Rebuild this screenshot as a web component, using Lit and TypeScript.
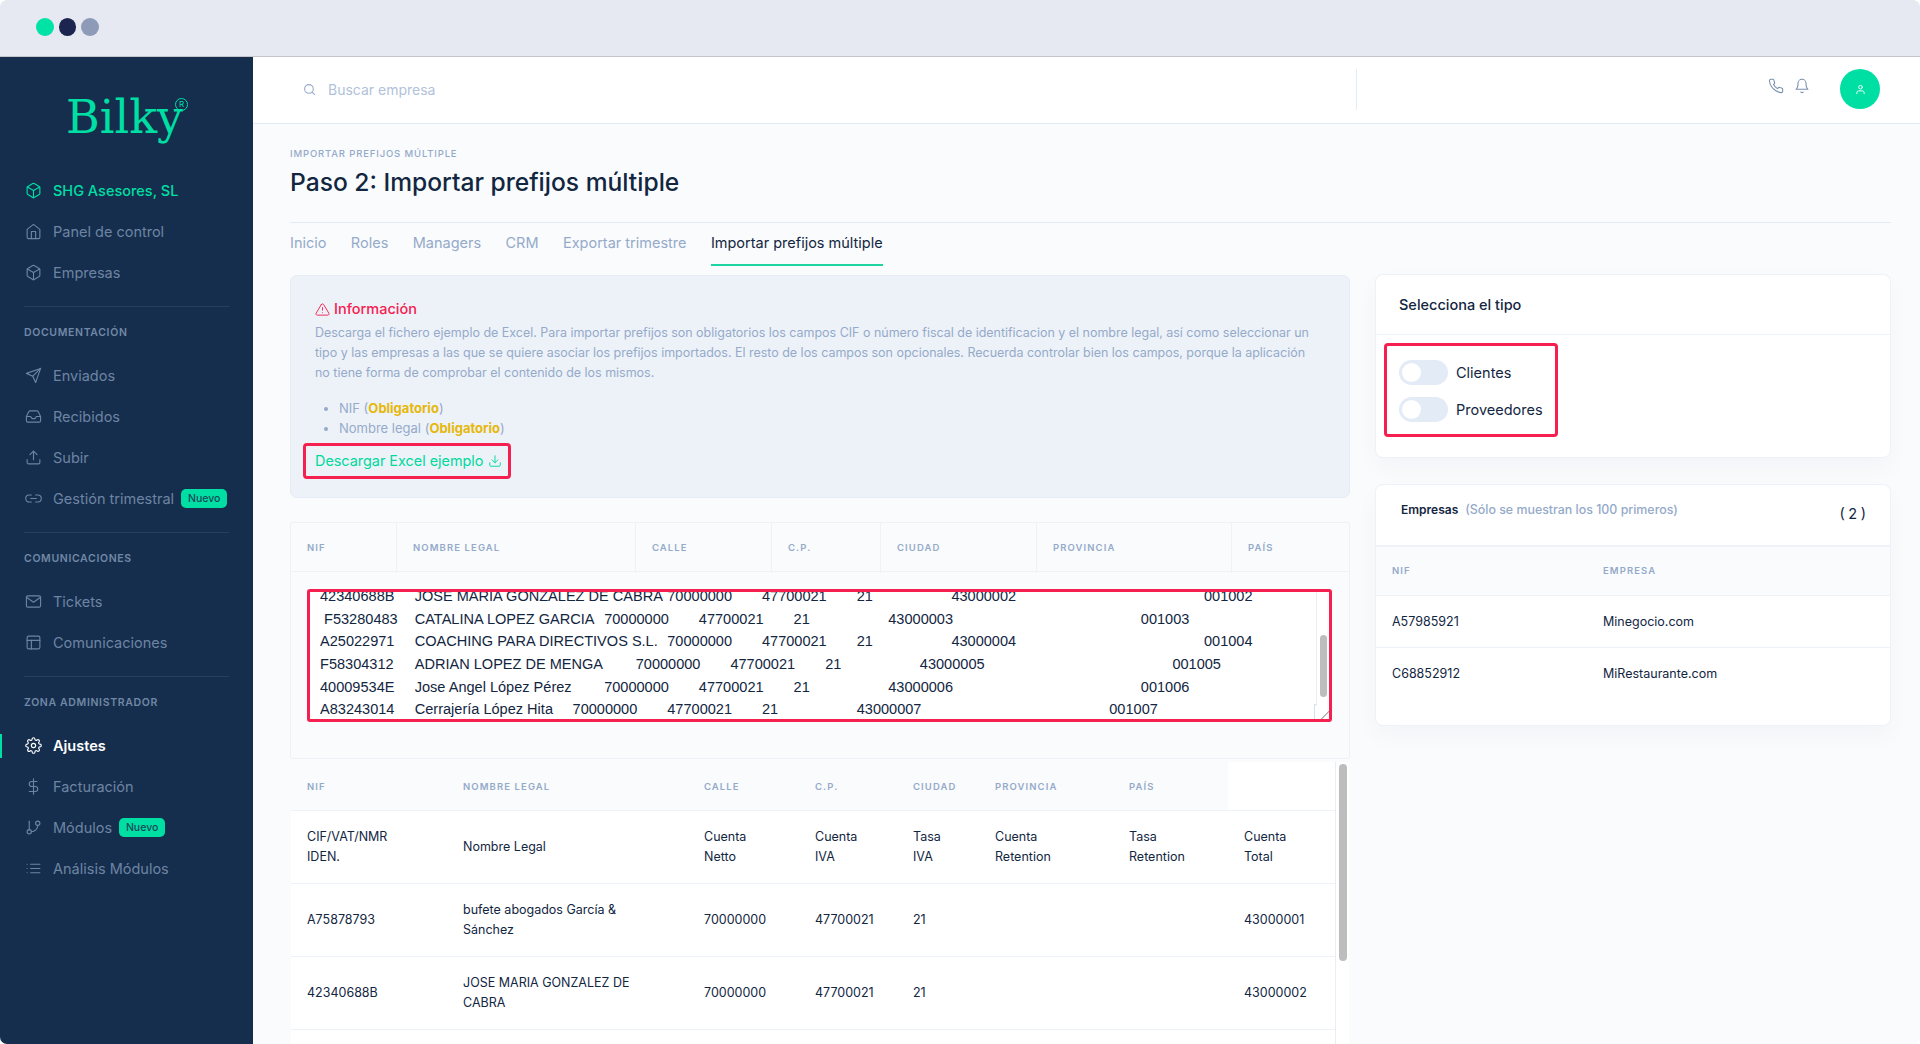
import { LitElement, html, css, svg } from 'lit';
import { customElement } from 'lit/decorators.js';

const ICONS: Record<string, unknown> = {
  box: svg`<path d="M21 16V8a2 2 0 0 0-1-1.73l-7-4a2 2 0 0 0-2 0l-7 4A2 2 0 0 0 3 8v8a2 2 0 0 0 1 1.73l7 4a2 2 0 0 0 2 0l7-4A2 2 0 0 0 21 16z"/><polyline points="3.27 6.96 12 12.01 20.73 6.96"/><line x1="12" y1="22.08" x2="12" y2="12"/>`,
  home: svg`<path d="M3 9l9-7 9 7v11a2 2 0 0 1-2 2H5a2 2 0 0 1-2-2z"/><polyline points="9 22 9 12 15 12 15 22"/>`,
  send: svg`<line x1="22" y1="2" x2="11" y2="13"/><polygon points="22 2 15 22 11 13 2 9 22 2"/>`,
  inbox: svg`<polyline points="22 12 16 12 14 15 10 15 8 12 2 12"/><path d="M5.45 5.11L2 12v6a2 2 0 0 0 2 2h16a2 2 0 0 0 2-2v-6l-3.45-6.89A2 2 0 0 0 16.76 4H7.24a2 2 0 0 0-1.79 1.11z"/>`,
  upload: svg`<path d="M21 15v4a2 2 0 0 1-2 2H5a2 2 0 0 1-2-2v-4"/><polyline points="17 8 12 3 7 8"/><line x1="12" y1="3" x2="12" y2="15"/>`,
  link: svg`<path d="M15 7h3a5 5 0 0 1 5 5 5 5 0 0 1-5 5h-3m-6 0H6a5 5 0 0 1-5-5 5 5 0 0 1 5-5h3"/><line x1="8" y1="12" x2="16" y2="12"/>`,
  mail: svg`<path d="M4 4h16c1.1 0 2 .9 2 2v12c0 1.1-.9 2-2 2H4c-1.1 0-2-.9-2-2V6c0-1.1.9-2 2-2z"/><polyline points="22,6 12,13 2,6"/>`,
  layout: svg`<rect x="3" y="3" width="18" height="18" rx="2" ry="2"/><line x1="3" y1="9" x2="21" y2="9"/><line x1="9" y1="21" x2="9" y2="9"/>`,
  settings: svg`<circle cx="12" cy="12" r="3"/><path d="M19.4 15a1.65 1.65 0 0 0 .33 1.82l.06.06a2 2 0 0 1 0 2.83 2 2 0 0 1-2.83 0l-.06-.06a1.65 1.65 0 0 0-1.82-.33 1.65 1.65 0 0 0-1 1.51V21a2 2 0 0 1-2 2 2 2 0 0 1-2-2v-.09A1.65 1.65 0 0 0 9 19.4a1.65 1.65 0 0 0-1.82.33l-.06.06a2 2 0 0 1-2.83 0 2 2 0 0 1 0-2.83l.06-.06a1.65 1.65 0 0 0 .33-1.82 1.65 1.65 0 0 0-1.51-1H3a2 2 0 0 1-2-2 2 2 0 0 1 2-2h.09A1.65 1.65 0 0 0 4.6 9a1.65 1.65 0 0 0-.33-1.82l-.06-.06a2 2 0 0 1 0-2.83 2 2 0 0 1 2.83 0l.06.06a1.65 1.65 0 0 0 1.82.33H9a1.65 1.65 0 0 0 1-1.51V3a2 2 0 0 1 2-2 2 2 0 0 1 2 2v.09a1.65 1.65 0 0 0 1 1.51 1.65 1.65 0 0 0 1.82-.33l.06-.06a2 2 0 0 1 2.83 0 2 2 0 0 1 0 2.83l-.06.06a1.65 1.65 0 0 0-.33 1.82V9a1.65 1.65 0 0 0 1.51 1H21a2 2 0 0 1 2 2 2 2 0 0 1-2 2h-.09a1.65 1.65 0 0 0-1.51 1z"/>`,
  dollar: svg`<line x1="12" y1="1" x2="12" y2="23"/><path d="M17 5H9.5a3.5 3.5 0 0 0 0 7h5a3.5 3.5 0 0 1 0 7H6"/>`,
  branch: svg`<line x1="6" y1="3" x2="6" y2="15"/><circle cx="18" cy="6" r="3"/><circle cx="6" cy="18" r="3"/><path d="M18 9a9 9 0 0 1-9 9"/>`,
  list: svg`<line x1="8" y1="6" x2="21" y2="6"/><line x1="8" y1="12" x2="21" y2="12"/><line x1="8" y1="18" x2="21" y2="18"/><line x1="3" y1="6" x2="3.01" y2="6"/><line x1="3" y1="12" x2="3.01" y2="12"/><line x1="3" y1="18" x2="3.01" y2="18"/>`,
  search: svg`<circle cx="11" cy="11" r="8"/><line x1="21" y1="21" x2="16.65" y2="16.65"/>`,
  phone: svg`<path d="M22 16.92v3a2 2 0 0 1-2.18 2 19.79 19.79 0 0 1-8.63-3.07 19.5 19.5 0 0 1-6-6 19.79 19.79 0 0 1-3.07-8.67A2 2 0 0 1 4.11 2h3a2 2 0 0 1 2 1.72 12.84 12.84 0 0 0 .7 2.81 2 2 0 0 1-.45 2.11L8.09 9.91a16 16 0 0 0 6 6l1.27-1.27a2 2 0 0 1 2.11-.45 12.84 12.84 0 0 0 2.81.7A2 2 0 0 1 22 16.92z"/>`,
  bell: svg`<path d="M18 8A6 6 0 0 0 6 8c0 7-3 9-3 9h18s-3-2-3-9"/><path d="M13.73 21a2 2 0 0 1-3.46 0"/>`,
  user: svg`<path d="M20 21v-2a4 4 0 0 0-4-4H8a4 4 0 0 0-4 4v2"/><circle cx="12" cy="7" r="4"/>`,
  alert: svg`<path d="M10.29 3.86L1.82 18a2 2 0 0 0 1.71 3h16.94a2 2 0 0 0 1.71-3L13.71 3.86a2 2 0 0 0-3.42 0z"/><line x1="12" y1="9" x2="12" y2="13"/><line x1="12" y1="17" x2="12.01" y2="17"/>`,
  download: svg`<path d="M21 15v4a2 2 0 0 1-2 2H5a2 2 0 0 1-2-2v-4"/><polyline points="7 10 12 15 17 10"/><line x1="12" y1="15" x2="12" y2="3"/>`,
};

const icon = (name: string) =>
  html`<svg class="ic" viewBox="0 0 24 24" fill="none" stroke="currentColor" stroke-width="2" stroke-linecap="round" stroke-linejoin="round">${ICONS[name]}</svg>`;

interface NavItem {
  label: string;
  icon: string;
  cls?: string;
  badge?: boolean;
}

const NAV: { heading?: string; items: NavItem[] }[] = [
  {
    items: [
      { label: 'SHG Asesores, SL', icon: 'box', cls: 'company' },
      { label: 'Panel de control', icon: 'home' },
      { label: 'Empresas', icon: 'box' },
    ],
  },
  {
    heading: 'Documentación',
    items: [
      { label: 'Enviados', icon: 'send' },
      { label: 'Recibidos', icon: 'inbox' },
      { label: 'Subir', icon: 'upload' },
      { label: 'Gestión trimestral', icon: 'link', badge: true },
    ],
  },
  {
    heading: 'Comunicaciones',
    items: [
      { label: 'Tickets', icon: 'mail' },
      { label: 'Comunicaciones', icon: 'layout' },
    ],
  },
  {
    heading: 'Zona administrador',
    items: [
      { label: 'Ajustes', icon: 'settings', cls: 'active' },
      { label: 'Facturación', icon: 'dollar' },
      { label: 'Módulos', icon: 'branch', badge: true },
      { label: 'Análisis Módulos', icon: 'list' },
    ],
  },
];

const TABS = ['Inicio', 'Roles', 'Managers', 'CRM', 'Exportar trimestre', 'Importar prefijos múltiple'];
const COLUMNS = ['NIF', 'Nombre legal', 'Calle', 'C.P.', 'Ciudad', 'Provincia', 'País'];

const PASTED = [
  'NIF\tNOMBRE LEGAL\tCALLE\tC.P.\tCIUDAD\tPROVINCIA\tPAÍS',
  'CIF/VAT/NMR IDEN.\tNombre Legal\tCuenta Netto\tCuenta IVA\tTasa IVA',
  'A75878793\tbufete abogados García & Sánchez\t70000000\t47700021\t21',
  '',
  '42340688B\tJOSE MARIA GONZALEZ DE CABRA\t70000000\t47700021\t21\t\t\t43000002\t\t\t\t\t\t001002',
  ' F53280483\tCATALINA LOPEZ GARCIA\t70000000\t47700021\t21\t\t\t43000003\t\t\t\t\t\t001003',
  'A25022971\tCOACHING PARA DIRECTIVOS S.L.\t70000000\t47700021\t21\t\t\t43000004\t\t\t\t\t\t001004',
  'F58304312\tADRIAN LOPEZ DE MENGA\t70000000\t47700021\t21\t\t\t43000005\t\t\t\t\t\t001005',
  '40009534E\tJose Angel López Pérez\t70000000\t47700021\t21\t\t\t43000006\t\t\t\t\t\t001006',
  'A83243014\tCerrajería López Hita\t70000000\t47700021\t21\t\t\t43000007\t\t\t\t\t\t001007',
].join('\n');

const ROWS = [
  ['CIF/VAT/NMR\nIDEN.', 'Nombre Legal', 'Cuenta\nNetto', 'Cuenta\nIVA', 'Tasa\nIVA', 'Cuenta\nRetention', 'Tasa\nRetention', 'Cuenta\nTotal'],
  ['A75878793', 'bufete abogados García &\nSánchez', '70000000', '47700021', '21', '', '', '43000001'],
  ['42340688B', 'JOSE MARIA GONZALEZ DE\nCABRA', '70000000', '47700021', '21', '', '', '43000002'],
];

@customElement('app-root')
export class AppRoot extends LitElement {
  static override styles = css`
    :host {
      display: block;
      height: 1044px;
      background: #fff;
      font-family: 'Inter', sans-serif;
      color: #12263f;
    }

    .ic {
      display: block;
      flex: none;
    }

    .shell {
      height: 1044px;
      border-radius: 7px;
      overflow: hidden;
      display: grid;
      grid-template-columns: 253px 1fr;
      grid-template-rows: 57px 1fr;
      background: #f9fbfd;
    }

    /* Window bar */
    .winbar {
      grid-column: 1 / 3;
      background: #e6e9f1;
      border-bottom: 1px solid #c3c5ca;
      display: flex;
      align-items: center;
      gap: 5px;
      padding: 0 0 2px 36px;
    }

    .dot {
      width: 17.5px;
      height: 18px;
      border-radius: 50%;
    }

    .dot.a { background: #00e2a6; }
    .dot.b { background: #1b2550; }
    .dot.c { background: #8d9bb8; }

    /* Sidebar */
    .side {
      background: #152e4d;
      color: #6e84a3;
      min-height: 0;
      overflow: hidden;
    }

    .logo {
      height: 112.5px;
      display: flex;
      padding: 34px 0 0 66px;
      box-sizing: border-box;
      color: #00dfa3;
      font-family: 'DejaVu Serif', serif;
      font-size: 46px;
      line-height: 52px;
    }

    .reg {
      flex: none;
      width: 13px;
      height: 13px;
      margin: 7px 0 0 -8px;
      box-sizing: border-box;
      border: 1.2px solid #00dfa3;
      border-radius: 50%;
      font-family: 'Inter', sans-serif;
      font-size: 8px;
      line-height: 10.6px;
      text-align: center;
    }

    .reg::before {
      content: 'R';
    }

    .group + .group {
      border-top: 1px solid #243f60;
      margin: 13px 24px 0;
    }

    .group + .group .item {
      margin: 0 -24px;
    }

    .heading {
      margin-top: 19px;
      margin-bottom: 15.2px;
      height: 14px;
      line-height: 14px;
      font-size: 10.5px;
      font-weight: 600;
      letter-spacing: 0.65px;
      text-transform: uppercase;
      color: #7188a6;
    }

    .item {
      height: 41px;
      display: flex;
      align-items: center;
      padding-left: 25px;
      font-size: 14.5px;
      position: relative;
    }

    .item .ic {
      width: 17px;
      height: 17px;
      stroke-width: 1.6;
      margin-right: 11px;
    }

    .item.company {
      color: #00dfa3;
      font-weight: 500;
    }

    .item.active {
      color: #fff;
      font-weight: 600;
    }

    .item.active::before {
      content: '';
      position: absolute;
      left: 0;
      top: 9px;
      width: 2px;
      height: 24px;
      background: #00dfa3;
    }

    .badge {
      margin-left: 7px;
      width: 46px;
      height: 19px;
      line-height: 19px;
      border-radius: 5px;
      background: #00dfa3;
      color: #17495a;
      font-size: 10.5px;
      font-weight: 500;
      text-align: center;
    }

    /* Main column */
    .main {
      min-width: 0;
      min-height: 0;
      display: flex;
      flex-direction: column;
    }

    .topbar {
      height: 67px;
      flex: none;
      box-sizing: border-box;
      background: #fff;
      border-bottom: 1px solid #e3ebf6;
      display: flex;
      align-items: center;
      padding: 0 40px 2px 50px;
      color: #b1c2d9;
      font-size: 14px;
    }

    .topbar .search {
      width: 13px;
      height: 13px;
      margin-right: 12px;
      color: #95aac9;
    }

    .topbar .spacer {
      width: 1028px;
      flex: none;
      white-space: nowrap;
    }

    .sep {
      height: 41px;
      border-left: 1px solid #e3ebf6;
    }

    .tools {
      margin-left: auto;
      display: flex;
      align-items: center;
      color: #7a8fae;
      padding-bottom: 6px;
      gap: 10px;
    }

    .tools .ic {
      width: 16px;
      height: 16px;
      stroke-width: 1.6;
    }

    .avatar {
      margin-left: 30px;
      width: 40px;
      height: 40px;
      border-radius: 50%;
      background: #00dfa3;
      color: #fff;
      display: flex;
      align-items: center;
      justify-content: center;
    }

    .avatar .ic {
      width: 11px;
      height: 11px;
    }

    .page {
      flex: 1;
      min-height: 0;
      display: flex;
      flex-direction: column;
      padding: 23px 29px 0 37px;
    }

    .crumb {
      height: 14px;
      line-height: 14px;
      font-size: 9.5px;
      font-weight: 500;
      letter-spacing: 0.85px;
      text-transform: uppercase;
      color: #95aac9;
    }

    h1 {
      margin: 4px 0 0;
      height: 34px;
      line-height: 34px;
      font-size: 24.6px;
      font-weight: 500;
    }

    .tabs {
      margin-top: 23px;
      border-top: 1px solid #e3ebf6;
      height: 44px;
      flex: none;
      display: flex;
      gap: 24.4px;
      font-size: 14.5px;
      color: #95aac9;
    }

    .tab {
      line-height: 39px;
      height: 43px;
      box-sizing: border-box;
    }

    .tab.on {
      color: #12263f;
      border-bottom: 2px solid #1ed4a0;
    }

    .cols {
      flex: 1;
      min-height: 0;
      margin-top: 8px;
      display: grid;
      grid-template-columns: 1060px 516px;
      gap: 25px;
    }

    .left {
      min-height: 0;
      display: flex;
      flex-direction: column;
    }

    .right {
      margin-top: -1px;
    }

    /* Info box */
    .info {
      flex: none;
      height: 223px;
      box-sizing: border-box;
      background: #edf2f9;
      border: 1px solid #e6ecf5;
      border-radius: 7px;
      padding: 23px 24px 0;
      font-size: 12.5px;
      line-height: 20px;
      color: #95aac9;
    }

    .info h4 {
      margin: 0 0 4px;
      display: flex;
      align-items: center;
      gap: 4px;
      font-size: 14.5px;
      line-height: 20px;
      font-weight: 500;
      color: #f5204f;
    }

    .info h4 .ic {
      width: 15px;
      height: 15px;
      stroke-width: 1.5;
    }

    .info p {
      margin: 0;
      white-space: nowrap;
      letter-spacing: -0.02px;
    }

    .info ul {
      margin: 15px 0 0;
      padding: 0 0 0 24px;
      font-size: 13px;
    }

    .info b {
      color: #e6b80c;
      font-weight: 700;
    }

    .dl {
      margin: 5px 0 0 -12px;
      width: 208px;
      height: 36px;
      box-sizing: border-box;
      border: 3px solid #f5204f;
      border-radius: 4px;
      padding-left: 9px;
      display: flex;
      align-items: center;
      gap: 4px;
      color: #00d99b;
      font-size: 14.4px;
      white-space: nowrap;
    }

    .dl .ic {
      width: 14px;
      height: 14px;
      stroke-width: 1.6;
    }

    /* Pasted data box */
    .paste {
      flex: none;
      height: 237px;
      box-sizing: border-box;
      margin-top: 24px;
      border: 1px solid #edf2f9;
      border-radius: 2px;
    }

    .paste-head {
      height: 48px;
      display: grid;
      grid-template-columns: 105px 239px 136px 109px 156px 195px 1fr;
      border-bottom: 1px solid #edf2f9;
    }

    .label {
      font-size: 9.5px;
      font-weight: 600;
      letter-spacing: 1.1px;
      text-transform: uppercase;
      color: #95aac9;
    }

    .paste-head .label {
      line-height: 50px;
      padding-left: 16px;
      border-left: 1px solid #edf2f9;
    }

    .paste-head .label:first-child {
      border-left: 0;
    }

    .area {
      position: relative;
      margin: 17px 0 0 16px;
      width: 1025px;
      height: 133px;
    }

    textarea {
      display: block;
      width: 100%;
      height: 100%;
      box-sizing: border-box;
      border: 3px solid #f5204f;
      border-radius: 3px;
      outline: 0;
      padding: 0 0 0 10px;
      background: #fff;
      color: #12263f;
      font-family: 'Liberation Sans', Arial, sans-serif;
      font-size: 14.55px;
      line-height: 22.7px;
      tab-size: 31.57px;
      white-space: pre;
      overflow: hidden;
      resize: both;
    }

    textarea::-webkit-resizer {
      background: linear-gradient(135deg, #fff 70%, #8a8a8a 72%, #fff 78%);
      border: 1px solid #d5deeb;
      border-width: 1px 0 0 1px;
    }

    /* Drawn scrollbars, lying over the scrolling content */
    .bar {
      position: absolute;
      box-sizing: border-box;
      background: #fff;
      border-left: 1px solid #eaeef4;
    }

    .bar i {
      position: absolute;
      display: block;
      background: #bdbdbd;
      border-radius: 4px;
    }

    .area .bar {
      top: 3px;
      right: 3px;
      width: 13px;
      height: 114px;
    }

    .area .bar i {
      left: 3px;
      top: 43px;
      width: 7px;
      height: 62px;
    }

    .table-wrap {
      position: relative;
      flex: 1;
      min-height: 0;
      margin: 3px 1px 0 1px;
    }

    .scroller {
      height: 100%;
      background: #fff;
      overflow: hidden;
      border-top-left-radius: 6px;
    }

    .table-wrap .bar {
      top: 0;
      right: 0;
      bottom: 0;
      width: 14px;
    }

    .table-wrap .bar i {
      left: 3px;
      top: 2px;
      width: 8px;
      height: 197px;
    }

    table {
      border-collapse: collapse;
      table-layout: fixed;
      font-size: 12.5px;
      line-height: 20px;
    }

    th {
      height: 46px;
      padding: 2px 0 0 16px;
      text-align: left;
      background: #f9fbfd;
      border-bottom: 1px solid #edf2f9;
    }

    th.blank {
      background: #fff;
    }

    td {
      height: 72px;
      padding: 0 0 0 16px;
      border-bottom: 1px solid #edf2f9;
      white-space: pre-line;
    }

    /* Right column */
    .card {
      background: #fff;
      border: 1px solid #edf2f9;
      border-radius: 8px;
      box-shadow: 0 10px 24px rgba(18, 38, 63, 0.03);
    }

    .type {
      height: 184px;
      box-sizing: border-box;
    }

    .type h4 {
      margin: 0;
      height: 60px;
      box-sizing: border-box;
      padding-left: 23px;
      border-bottom: 1px solid #edf2f9;
      font-size: 14.5px;
      font-weight: 500;
      line-height: 60px;
    }

    .pick {
      margin: 8px 0 0 8px;
      width: 174px;
      height: 94px;
      box-sizing: border-box;
      border: 3px solid #f5204f;
      border-radius: 4px;
      padding: 14px 0 0 12px;
      display: flex;
      flex-direction: column;
      gap: 12px;
    }

    .opt {
      display: flex;
      align-items: center;
      gap: 8px;
      font-size: 14.5px;
      height: 25px;
    }

    .switch {
      width: 49px;
      height: 25px;
      border-radius: 13px;
      background: #e3ebf6;
      position: relative;
    }

    .switch::after {
      content: '';
      position: absolute;
      left: 3px;
      top: 3px;
      width: 19px;
      height: 19px;
      border-radius: 50%;
      background: #fff;
    }

    .companies {
      margin-top: 26px;
      height: 242px;
      box-sizing: border-box;
      overflow: hidden;
    }

    .companies-head {
      height: 62px;
      display: flex;
      padding: 15px 24px 0 25px;
      box-sizing: border-box;
      border-bottom: 2px solid #edf2f9;
      font-size: 12px;
      line-height: 20px;
      font-weight: 600;
    }

    .companies-head span {
      margin-left: 7px;
      color: #95aac9;
      font-size: 12.4px;
      font-weight: 500;
    }

    .companies-head em {
      margin-left: auto;
      margin-top: 4px;
      font-style: normal;
      font-weight: 400;
      font-size: 14.5px;
      word-spacing: -0.5px;
    }

    .companies table {
      width: 100%;
    }

    .companies th {
      height: 48px;
      padding-top: 0;
    }

    .companies td {
      height: 51px;
      line-height: 20px;
    }

    .companies tr:last-child td {
      border-bottom: 0;
    }
  `;

  protected override firstUpdated() {
    const area = this.renderRoot.querySelector('textarea');
    if (area) area.scrollTop = 98;
  }

  private renderNav() {
    return NAV.map(
      (group) => html`
        <div class="group">
          ${group.heading ? html`<div class="heading">${group.heading}</div>` : ''}
          ${group.items.map(
            (item) => html`
              <div class="item ${item.cls ?? ''}">
                ${icon(item.icon)}<span>${item.label}</span>
                ${item.badge ? html`<span class="badge">Nuevo</span>` : ''}
              </div>
            `
          )}
        </div>
      `
    );
  }

  protected override render() {
    return html`
      <div class="shell">
        <div class="winbar">
          <div class="dot a"></div>
          <div class="dot b"></div>
          <div class="dot c"></div>
        </div>
        <aside class="side">
          <div class="logo">Bilky<span class="reg"></span></div>
          ${this.renderNav()}
        </aside>
        <div class="main">
          <header class="topbar">
            <span class="search">${icon('search')}</span>
            <span class="spacer">Buscar empresa</span>
            <span class="sep"></span>
            <div class="tools">${icon('phone')}${icon('bell')}</div>
            <div class="avatar">${icon('user')}</div>
          </header>
          <div class="page">
            <div class="crumb">Importar prefijos múltiple</div>
            <h1>Paso 2: Importar prefijos múltiple</h1>
            <nav class="tabs">
              ${TABS.map((t, i) => html`<div class="tab ${i === TABS.length - 1 ? 'on' : ''}">${t}</div>`)}
            </nav>
            <div class="cols">
              <div class="left">
                <section class="info">
                  <h4>${icon('alert')}Información</h4>
                  <p>Descarga el fichero ejemplo de Excel. Para importar prefijos son obligatorios los campos CIF o número fiscal de identificacion y el nombre legal, así como seleccionar un<br />tipo y las empresas a las que se quiere asociar los prefijos importados. El resto de los campos son opcionales. Recuerda controlar bien los campos, porque la aplicación<br />no tiene forma de comprobar el contenido de los mismos.</p>
                  <ul>
                    <li>NIF (<b>Obligatorio</b>)</li>
                    <li>Nombre legal (<b>Obligatorio</b>)</li>
                  </ul>
                  <div class="dl">Descargar Excel ejemplo ${icon('download')}</div>
                </section>
                <section class="paste">
                  <div class="paste-head">
                    ${COLUMNS.map((c) => html`<div class="label">${c}</div>`)}
                  </div>
                  <div class="area">
                    <textarea spellcheck="false" .value=${PASTED}></textarea>
                    <div class="bar"><i></i></div>
                  </div>
                </section>
                <div class="table-wrap">
                  <div class="scroller">
                    <table>
                      <colgroup>
                        ${[156, 241, 111, 98, 82, 134, 115, 107].map((w) => html`<col style="width:${w}px" />`)}
                      </colgroup>
                      <thead>
                        <tr>
                          ${COLUMNS.map((c) => html`<th class="label">${c}</th>`)}
                          <th class="blank"></th>
                        </tr>
                      </thead>
                      <tbody>
                        ${ROWS.map((r) => html`<tr>${r.map((c) => html`<td>${c}</td>`)}</tr>`)}
                      </tbody>
                    </table>
                  </div>
                  <div class="bar"><i></i></div>
                </div>
              </div>
              <div class="right">
                <section class="card type">
                  <h4>Selecciona el tipo</h4>
                  <div class="pick">
                    <label class="opt"><span class="switch"></span>Clientes</label>
                    <label class="opt"><span class="switch"></span>Proveedores</label>
                  </div>
                </section>
                <section class="card companies">
                  <div class="companies-head">
                    Empresas <span>(Sólo se muestran los 100 primeros)</span><em>( 2 )</em>
                  </div>
                  <table>
                    <colgroup>
                      <col style="width:211px" />
                      <col />
                    </colgroup>
                    <thead>
                      <tr><th class="label">NIF</th><th class="label">Empresa</th></tr>
                    </thead>
                    <tbody>
                      <tr><td>A57985921</td><td>Minegocio.com</td></tr>
                      <tr><td>C68852912</td><td>MiRestaurante.com</td></tr>
                    </tbody>
                  </table>
                </section>
              </div>
            </div>
          </div>
        </div>
      </div>
    `;
  }
}

declare global {
  interface HTMLElementTagNameMap {
    'app-root': AppRoot;
  }
}
